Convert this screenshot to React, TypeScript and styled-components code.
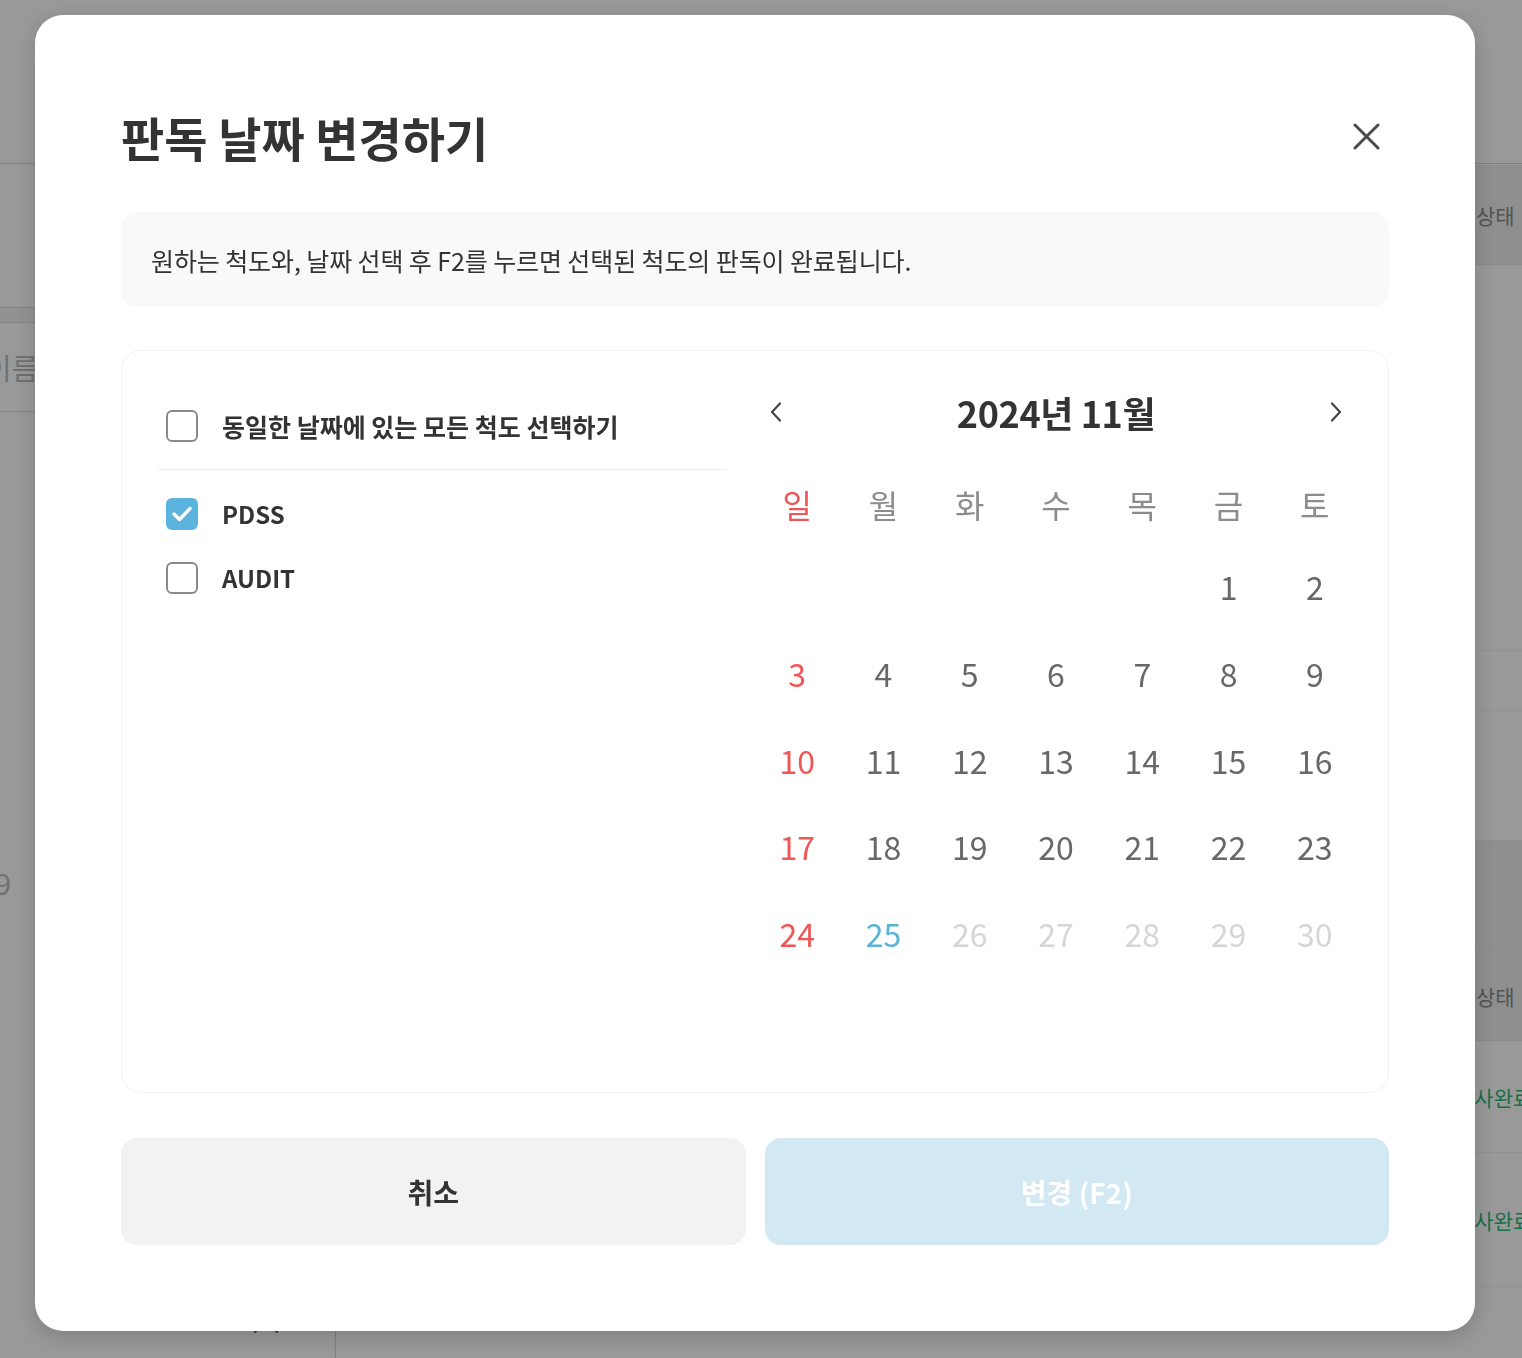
import React from "react";
import styled, { createGlobalStyle } from "styled-components";

const GlobalStyle = createGlobalStyle`
  html, body {
    margin: 0;
    padding: 0;
    background: #ffffff;
    overflow: hidden;
  }
  body {
    font-family: "Noto Sans CJK KR", "Noto Sans", sans-serif;
    color: #333;
  }
  * { box-sizing: border-box; }
`;

/* ---------- background page (under the dim overlay) ---------- */

const Page = styled.div`
  width: 1522px;
  height: 1358px;
  background: #fff;
  display: flex;
  flex-direction: column;
  overflow: hidden;
`;

const PageHeader = styled.header`
  height: 164px;
  flex-shrink: 0;
  border-bottom: 1px solid #d8d8d8;
`;

const PageBody = styled.div`
  flex: 1;
  display: grid;
  grid-template-columns: 336px 1fr 122px;
`;

const SidePanel = styled.aside`
  border-right: 1px solid #d8d8d8;
  display: flex;
  flex-direction: column;
`;

const SideSpacer = styled.div<{ $h: number; $band?: boolean; $line?: boolean }>`
  height: ${(p) => p.$h}px;
  flex-shrink: 0;
  border-bottom: 1px solid ${(p) => (p.$line === false ? "transparent" : "#dcdcdc")};
  background: ${(p) => (p.$band ? "#f4f4f4" : "transparent")};
`;

const SideRow = styled.div<{ $h: number; $line?: boolean }>`
  height: ${(p) => p.$h}px;
  flex-shrink: 0;
  display: flex;
  align-items: center;
  border-bottom: 1px solid ${(p) => (p.$line === false ? "transparent" : "#dcdcdc")};
  font-size: 29px;
  color: #bcbcbc;
  white-space: nowrap;
`;

const ClippedText = styled.span<{ $shift: number }>`
  margin-left: ${(p) => p.$shift}px;
`;

const SideFooter = styled.div`
  margin-top: auto;
  height: 48px;
  display: flex;
  align-items: center;
  padding: 0 0 14px 253px;
  color: #555;
`;

const Middle = styled.main``;

const StatusPanel = styled.section`
  display: flex;
  flex-direction: column;
  padding-top: 1px;
`;

const StatusCell = styled.div<{ $h: number; $band?: boolean; $green?: boolean; $pad: number }>`
  height: ${(p) => p.$h}px;
  flex-shrink: 0;
  display: flex;
  align-items: center;
  padding-left: ${(p) => p.$pad}px;
  white-space: nowrap;
  font-size: 21px;
  background: ${(p) => (p.$band ? "#efefef" : "transparent")};
  color: ${(p) => (p.$green ? "#2fb877" : "#8a8a8a")};
  border-bottom: 1px solid ${(p) => (p.$band ? "#e8e8e8" : "#f2f2f2")};
`;

/* ---------- overlay + modal ---------- */

const Overlay = styled.div`
  position: fixed;
  inset: 0;
  background: rgba(0, 0, 0, 0.4);
  display: flex;
  justify-content: center;
  align-items: flex-start;
  padding: 15px 12px 0 0;
`;

const Modal = styled.div`
  width: 1440px;
  height: 1316px;
  background: #fff;
  border-radius: 28px;
  box-shadow: 0 6px 24px rgba(0, 0, 0, 0.18);
  padding: 86px 86px;
  display: flex;
  flex-direction: column;
`;

const ModalHeader = styled.div`
  height: 70px;
  display: flex;
  align-items: center;
  justify-content: space-between;
`;

const Title = styled.h1`
  margin: 0;
  font-size: 47px;
  font-weight: 700;
  letter-spacing: 0;
  color: #333;
`;

const CloseButton = styled.button`
  width: 40px;
  height: 40px;
  margin-right: 3px;
  border: 0;
  background: none;
  padding: 0;
  display: flex;
  align-items: center;
  justify-content: center;
  cursor: pointer;
`;

const InfoBox = styled.div`
  margin-top: 41px;
  height: 95px;
  border-radius: 16px;
  background: #f9f9f9;
  display: flex;
  align-items: center;
  padding: 0 30px;
  font-size: 25px;
  letter-spacing: -0.1px;
  color: #333;
`;

const MainBox = styled.div`
  margin-top: 43px;
  height: 743px;
  border: 1px solid #f1f1f1;
  border-radius: 20px;
  padding: 39px 30px 39px 36px;
  display: grid;
  grid-template-columns: 568px 1fr;
  column-gap: 28px;
`;

const ScaleColumn = styled.div`
  display: flex;
  flex-direction: column;
`;

const SelectAllRow = styled.label`
  display: flex;
  align-items: center;
  gap: 24px;
  padding: 20px 8px 27px;
  border-bottom: 1px solid #ececec;
  font-size: 25px;
  line-height: 32px;
  font-weight: 700;
  color: #333;
  cursor: pointer;
`;

const ScaleList = styled.div`
  padding-top: 28px;
  display: flex;
  flex-direction: column;
  gap: 32px;
`;

const ScaleRow = styled.label`
  display: flex;
  align-items: center;
  gap: 24px;
  padding: 0 8px;
  font-size: 24px;
  line-height: 32px;
  font-weight: 700;
  color: #333;
  cursor: pointer;
`;

const Box = styled.span<{ $checked: boolean }>`
  width: 32px;
  height: 32px;
  flex-shrink: 0;
  border-radius: 6px;
  border: ${(p) => (p.$checked ? "0" : "2.5px solid #8a8a8a")};
  background: ${(p) => (p.$checked ? "#5bb4de" : "#fff")};
  display: flex;
  align-items: center;
  justify-content: center;
`;

const Calendar = styled.div`
  display: flex;
  flex-direction: column;
`;

const CalHeader = styled.div`
  height: 44px;
  display: flex;
  align-items: center;
  justify-content: space-between;
  padding: 0 12px 0 12px;
`;

const NavButton = styled.button`
  width: 20px;
  height: 30px;
  border: 0;
  padding: 0;
  background: none;
  display: flex;
  align-items: center;
  justify-content: center;
  cursor: pointer;
`;

const MonthTitle = styled.div`
  font-size: 36px;
  font-weight: 700;
  color: #333;
  letter-spacing: -0.4px;
`;

const WeekGrid = styled.div`
  margin-top: 31px;
  display: grid;
  grid-template-columns: repeat(7, 1fr);
  grid-template-rows: 78px;
`;

const DayGrid = styled.div`
  display: grid;
  grid-template-columns: repeat(7, 1fr);
  grid-auto-rows: 86.7px;
`;

type Tone = "normal" | "sunday" | "today" | "disabled" | "weekday";

const toneColor: Record<Tone, string> = {
  normal: "#686868",
  sunday: "#ef5656",
  today: "#5ab4d9",
  disabled: "#d6d6d6",
  weekday: "#8c8c8c",
};

const Cell = styled.div<{ $tone: Tone }>`
  display: flex;
  align-items: center;
  justify-content: center;
  font-size: 32px;
  font-weight: 400;
  color: ${(p) => toneColor[p.$tone]};
`;

const Actions = styled.div`
  margin-top: 45px;
  height: 107px;
  display: grid;
  grid-template-columns: 1fr 1fr;
  column-gap: 19px;
`;

const ActionButton = styled.button<{ $primary?: boolean }>`
  border: 0;
  border-radius: 16px;
  font-family: inherit;
  font-size: 28px;
  font-weight: 700;
  background: ${(p) => (p.$primary ? "#d2e8f3" : "#f2f2f2")};
  color: ${(p) => (p.$primary ? "#ffffff" : "#333333")};
  cursor: pointer;
`;

/* ---------- icons ---------- */

const CloseIcon = () => (
  <svg width="27" height="27" viewBox="0 0 27 27" fill="none">
    <path d="M2 2 L25 25 M25 2 L2 25" stroke="#4a4a4a" strokeWidth="3" strokeLinecap="round" />
  </svg>
);

const CheckMark = () => (
  <svg width="22" height="18" viewBox="0 0 22 18" fill="none">
    <path d="M3 9 L8.5 14.5 L19 3.5" stroke="#fff" strokeWidth="3.4" strokeLinecap="round" strokeLinejoin="round" />
  </svg>
);

const Chevron = ({ dir }: { dir: "left" | "right" }) => (
  <svg width="12" height="20" viewBox="0 0 12 20" fill="none">
    <path
      d={dir === "left" ? "M10 1.5 L2 10 L10 18.5" : "M2 1.5 L10 10 L2 18.5"}
      stroke="#444"
      strokeWidth="2.2"
      strokeLinecap="round"
      strokeLinejoin="round"
    />
  </svg>
);

const ChevronUp = () => (
  <svg width="26" height="14" viewBox="0 0 26 14" fill="none">
    <path d="M2 12 L13 2 L24 12" stroke="#555" strokeWidth="2" strokeLinecap="round" />
  </svg>
);

/* ---------- data ---------- */

const weekdays = ["일", "월", "화", "수", "목", "금", "토"];
const firstWeekday = 5; // 2024-11-01 is Friday
const daysInMonth = 30;
const today = 25;

const scales = [
  { name: "PDSS", checked: true },
  { name: "AUDIT", checked: false },
];

export default function App() {
  const cells: { day: number | null; tone: Tone }[] = [];
  for (let i = 0; i < firstWeekday; i++) cells.push({ day: null, tone: "normal" });
  for (let d = 1; d <= daysInMonth; d++) {
    const col = (firstWeekday + d - 1) % 7;
    let tone: Tone = "normal";
    if (d > today) tone = "disabled";
    else if (d === today) tone = "today";
    else if (col === 0) tone = "sunday";
    cells.push({ day: d, tone });
  }

  return (
    <>
      <GlobalStyle />
      <Page>
        <PageHeader />
        <PageBody>
          <SidePanel>
            <SideSpacer $h={144} />
            <SideSpacer $h={15} $band />
            <SideRow $h={89}>
              <ClippedText $shift={-15}>이름</ClippedText>
            </SideRow>
            <SideSpacer $h={430} $line={false} />
            <SideRow $h={80} $line={false}>
              <ClippedText $shift={-21}>19</ClippedText>
            </SideRow>
            <SideFooter>
              <ChevronUp />
            </SideFooter>
          </SidePanel>
          <Middle />
          <StatusPanel>
            <StatusCell $h={100} $band $pad={76}>상태</StatusCell>
            <StatusCell $h={386} $pad={76} />
            <StatusCell $h={60} $pad={76} />
            <StatusCell $h={130} $pad={76} />
            <StatusCell $h={110} $band $pad={76} />
            <StatusCell $h={90} $band $pad={76}>상태</StatusCell>
            <StatusCell $h={112} $pad={55} $green>검사완료</StatusCell>
            <StatusCell $h={134} $pad={55} $green>검사완료</StatusCell>
          </StatusPanel>
        </PageBody>
      </Page>

      <Overlay>
        <Modal>
          <ModalHeader>
            <Title>판독 날짜 변경하기</Title>
            <CloseButton aria-label="닫기">
              <CloseIcon />
            </CloseButton>
          </ModalHeader>

          <InfoBox>원하는 척도와, 날짜 선택 후 F2를 누르면 선택된 척도의 판독이 완료됩니다.</InfoBox>

          <MainBox>
            <ScaleColumn>
              <SelectAllRow>
                <Box $checked={false} />
                동일한 날짜에 있는 모든 척도 선택하기
              </SelectAllRow>
              <ScaleList>
                {scales.map((s) => (
                  <ScaleRow key={s.name}>
                    <Box $checked={s.checked}>{s.checked && <CheckMark />}</Box>
                    {s.name}
                  </ScaleRow>
                ))}
              </ScaleList>
            </ScaleColumn>

            <Calendar>
              <CalHeader>
                <NavButton aria-label="이전 달">
                  <Chevron dir="left" />
                </NavButton>
                <MonthTitle>2024년 11월</MonthTitle>
                <NavButton aria-label="다음 달">
                  <Chevron dir="right" />
                </NavButton>
              </CalHeader>
              <WeekGrid>
                {weekdays.map((w, i) => (
                  <Cell key={w} $tone={i === 0 ? "sunday" : "weekday"}>
                    {w}
                  </Cell>
                ))}
              </WeekGrid>
              <DayGrid>
                {cells.map((c, i) => (
                  <Cell key={i} $tone={c.tone}>
                    {c.day ?? ""}
                  </Cell>
                ))}
              </DayGrid>
            </Calendar>
          </MainBox>

          <Actions>
            <ActionButton>취소</ActionButton>
            <ActionButton $primary>변경 (F2)</ActionButton>
          </Actions>
        </Modal>
      </Overlay>
    </>
  );
}
